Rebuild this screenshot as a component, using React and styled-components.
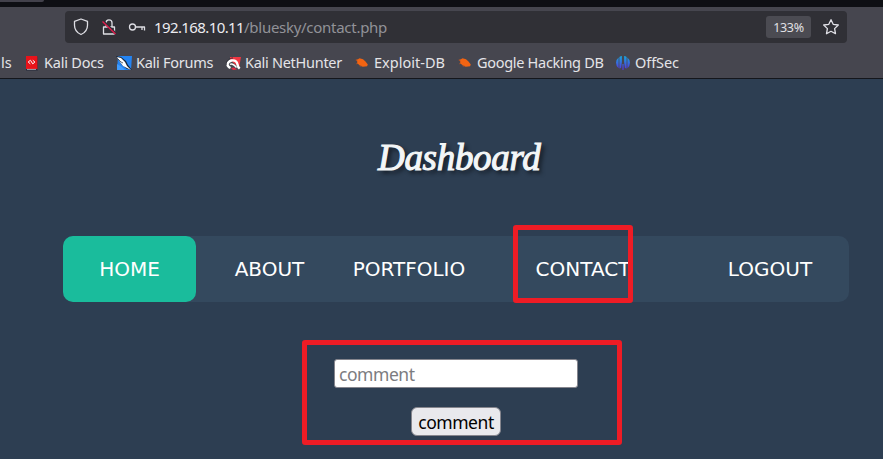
import React from "react";
import styled, { createGlobalStyle } from "styled-components";

const Global = createGlobalStyle`
  * { box-sizing: border-box; }
  body { margin: 0; background: #2c3e50; overflow: hidden; font-family: "Noto Sans", sans-serif; }
`;
const Screen = styled.div`
  position: relative; width: 883px; height: 459px; overflow: hidden; background: #2d3e52;
`;
const TabStrip = styled.div`
  height: 7px; background: #0e0f14;
  &::before { content: ""; display: block; width: 44px; height: 2px; background: #42414b; border-radius: 0 0 3px 0; }
`;
const Toolbar = styled.div`
  height: 41px; padding: 4px 36px 5px 65px; background: #46464f;
`;
const AddressBar = styled.div`
  height: 32px; display: flex; align-items: center; border-radius: 4px; background: #303036; padding: 0 7px 0 8px;
`;
const SecurityIcons = styled.div`
  display: flex; width: 81px; flex: none;
  svg { display: block; }
`;
const Url = styled.div`
  flex: 1; color: #929298; font-size: 15px; line-height: 20px; white-space: nowrap; letter-spacing: -0.28px;
`;
const Host = styled.span`color: #ececf0; letter-spacing: -0.6px;`;
const Zoom = styled.div`
  width: 45px; height: 22px; margin-right: 11px; border-radius: 3px; background: #4b4b52; color: #e0e0e4;
  font-size: 12.5px; line-height: 23px; text-align: center; letter-spacing: -0.3px;
`;
const Bookmarks = styled.div`
  height: 31px; display: flex; align-items: center; background: #46464f; border-bottom: 1px solid #14161c; color: #e4e4e8;
`;
const Cut = styled.div`width: 25px; font-size: 14.5px; line-height: 20px; margin-top: -2px; padding-left: 1px;`;
const Bookmark = styled.div`
  flex: none; width: ${p => p.$width}px; display: flex; align-items: center; gap: 4px; margin-top: -1px;
  svg { flex: none; display: block; }
`;
const Label = styled.span`
  font-size: 14.5px; line-height: 20px; margin-bottom: 2px; white-space: nowrap; letter-spacing: ${p => p.$track}px;
`;
const Page = styled.main`height: 380px; padding-top: 49px; background: #2d3e52;`;
const Title = styled.h1`
  margin: 0 0 0 378px; width: 190px; height: 60px;
  font: italic normal 37px/60px "Z003", "URW Chancery L", "Liberation Serif", serif;
  -webkit-text-stroke: 1.1px #f3f6f7;
  letter-spacing: -0.3px; color: #f3f6f7; text-shadow: 3px 3px 4px #10161e; white-space: nowrap;
`;
const Nav = styled.nav`
  margin: 48px 34px 0 63px; height: 66px; border-radius: 10px; background: #34495e;
  display: grid; grid-template-columns: 133px 147px 132px 216px 158px;
`;
const NavItem = styled.a`
  display: flex; align-items: center; justify-content: center; border-radius: 10px; color: #fff;
  background: ${p => (p.$active ? "#1abc9c" : "transparent")};
  font: 20px/24px "DejaVu Sans", sans-serif;
`;
const Form = styled.form`
  margin: 57px 0 0 334px; width: 244px; display: flex; flex-direction: column; align-items: center; gap: 19px;
`;
const Input = styled.input`
  width: 244px; height: 29px; padding: 1px 4px 0; border: 1px solid #85858d; border-radius: 3px; background: #fff;
  font: 17.5px "Noto Sans", sans-serif; letter-spacing: -0.45px; outline: 0;
  &::placeholder { color: #7c7c80; opacity: 1; }
`;
const Submit = styled.button`
  width: 90px; height: 29px; padding: 0; border: 1px solid #85858d; border-radius: 6px; background: #e9e9ed; color: #000;
  font: 17.5px/26px "Noto Sans", sans-serif; letter-spacing: -0.45px;
`;
const Highlight = styled.div`
  position: absolute; left: ${p => p.$x}px; top: ${p => p.$y}px; width: ${p => p.$w}px; height: ${p => p.$h}px;
  border: 5px solid #ee1c25; border-radius: 3px; pointer-events: none;
`;

const DocsIcon = () => (
  <svg width="15" height="16" viewBox="0 0 15 16">
    <path d="M1 1h11v13H1z" fill="#e8131a" /><path d="M12 1l1 1v13l-1-1z" fill="#7e2733" />
    <path d="M1 14h11l1 1.5H1z" fill="#252b3d" /><path d="M2 14.4h9" stroke="#d7d7dc" strokeWidth=".7" />
    <path d="M5.3 5.3 3.2 7l2.1 1.8M7.8 5.3 9.9 7 7.8 8.8M5.5 5.3l2.2 3.5" fill="none" stroke="#fff" strokeWidth="1" />
  </svg>
);
const ForumsIcon = () => (
  <svg width="16" height="16" viewBox="0 0 16 16">
    <path d="M2 1h14l-1 14H1z" fill="#2484f3" />
    <path d="M0 1l5 1 5 4 2 4 4 5-5-1-5-4z" fill="#182638" />
    <path d="m1 2 4 1 4 4 2 4 4 4-4-2-4-2-3-4z" fill="#fff" />
    <path d="m2 4 3 3 2 1" stroke="#314252" strokeWidth=".8" fill="none" />
    <path d="M1 9l5 3 3 3H1z" fill="#409cff" />
  </svg>
);
const HunterIcon = () => (
  <svg width="15" height="16" viewBox="0 0 15 16">
    <path d="M4 2h11l-2 11-3-3-6-5z" fill="#f13743" />
    <path d="M4.5 13C0 11 1 6.5 5.5 5.5 9 5 11 7 11.5 9.5c.3 2 1 3.2 2.2 4.2" fill="none" stroke="#fff" strokeWidth="2.4" />
    <path d="M4 9.5c2-1.5 4 .5 6.5 3" fill="none" stroke="#fff" strokeWidth="1.5" />
    <path d="M0 10C0 6 4 3 7 3" fill="none" stroke="#25262e" strokeWidth=".8" />
    <path d="m5 13 2 2 4-.5-3-2z" fill="#e72945" />
  </svg>
);
const ExploitIcon = () => (
  <svg width="15" height="16" viewBox="0 0 15 16">
    <path d="m1 4.8 2-.5 1.5-1 3.5 1L10.5 6.5l2.3 3-.7 1.8-2 .2-2.3.2-2.8-.9-1.5-1.5L1.8 8.5l.6-1.5z" fill="#f26412" />
    <path d="m.5 5 2 1M1 9l2-1M5 12l1-2" stroke="#a54f28" strokeWidth=".7" />
  </svg>
);
const OffSecIcon = () => (
  <svg width="16" height="16" viewBox="0 0 16 16">
    <defs><linearGradient id="offsec" x2="0" y2="1"><stop stopColor="#17a5dd" /><stop offset="1" stopColor="#5631df" /></linearGradient></defs>
    <path d="M3.6 2.5v10.7A6.8 6.8 0 0 1 3.6 2.5M6.9 1v6l-.8 6-1.7.5V2Q5.5 1.2 6.9 1M9.1 1v6l.8 6 1.7.5V2Q10.5 1.2 9.1 1M12.4 2.5v10.7A6.8 6.8 0 0 0 12.4 2.5M7.4 9h1.2v6H7.4z" fill="url(#offsec)" />
  </svg>
);

const bookmarks = [
  ["Kali Docs", 91, DocsIcon, -0.22],
  ["Kali Forums", 110, ForumsIcon, -0.26],
  ["Kali NetHunter", 129, HunterIcon, -0.28],
  ["Exploit-DB", 103, ExploitIcon, 0.02],
  ["Google Hacking DB", 157, ExploitIcon, -0.3],
  ["OffSec", 80, OffSecIcon, -0.08],
];

export default function App() {
  return (
    <>
      <Global />
      <Screen>
        <TabStrip />
        <Toolbar>
          <AddressBar>
            <SecurityIcons>
              <svg width="81" height="20" viewBox="0 0 81 20" fill="none" stroke="#dedee4" strokeWidth="1.3" strokeLinejoin="round">
                <path d="m8 2 6.5 2.4v3.8C14.5 12 12 15.7 8 17.5 4 15.7 1.5 12 1.5 8.2V4.4z" />
                <path d="M31 10h10.5v7h-11v-7zM33 10V5.8a3 3 0 0 1 6 0V10" />
                <path d="m30 4 13 13" stroke="#303036" strokeWidth="2.5" /><path d="m29.5 4.5 13 12.5" stroke="#e31b4c" />
                <circle cx="59.5" cy="10" r="3" /><path d="M62.5 10h9v3.5M69 10v3" />
              </svg>
            </SecurityIcons>
            <Url><Host>192.168.10.11</Host>/bluesky/contact.php</Url>
            <Zoom>133%</Zoom>
            <svg width="18" height="18" viewBox="0 0 18 18" fill="none" stroke="#e2e2e8" strokeWidth="1.3" strokeLinejoin="round">
              <path d="m9 1.7 2.2 4.6 5.1.7-3.7 3.6.9 5.1L9 13.3l-4.5 2.4.9-5.1L1.7 7l5.1-.7z" />
            </svg>
          </AddressBar>
        </Toolbar>
        <Bookmarks>
          <Cut>ls</Cut>
          {bookmarks.map(([label, width, Icon, track]) => (
            <Bookmark key={label} $width={width}><Icon /><Label $track={track}>{label}</Label></Bookmark>
          ))}
        </Bookmarks>
        <Page>
          <Title>Dashboard</Title>
          <Nav>
            <NavItem $active>HOME</NavItem>
            <NavItem>ABOUT</NavItem>
            <NavItem>PORTFOLIO</NavItem>
            <NavItem>CONTACT</NavItem>
            <NavItem>LOGOUT</NavItem>
          </Nav>
          <Form>
            <Input placeholder="comment" />
            <Submit type="button">comment</Submit>
          </Form>
        </Page>
        <Highlight $x={513} $y={225} $w={120} $h={78} />
        <Highlight $x={302} $y={340} $w={320} $h={105} />
      </Screen>
    </>
  );
}
